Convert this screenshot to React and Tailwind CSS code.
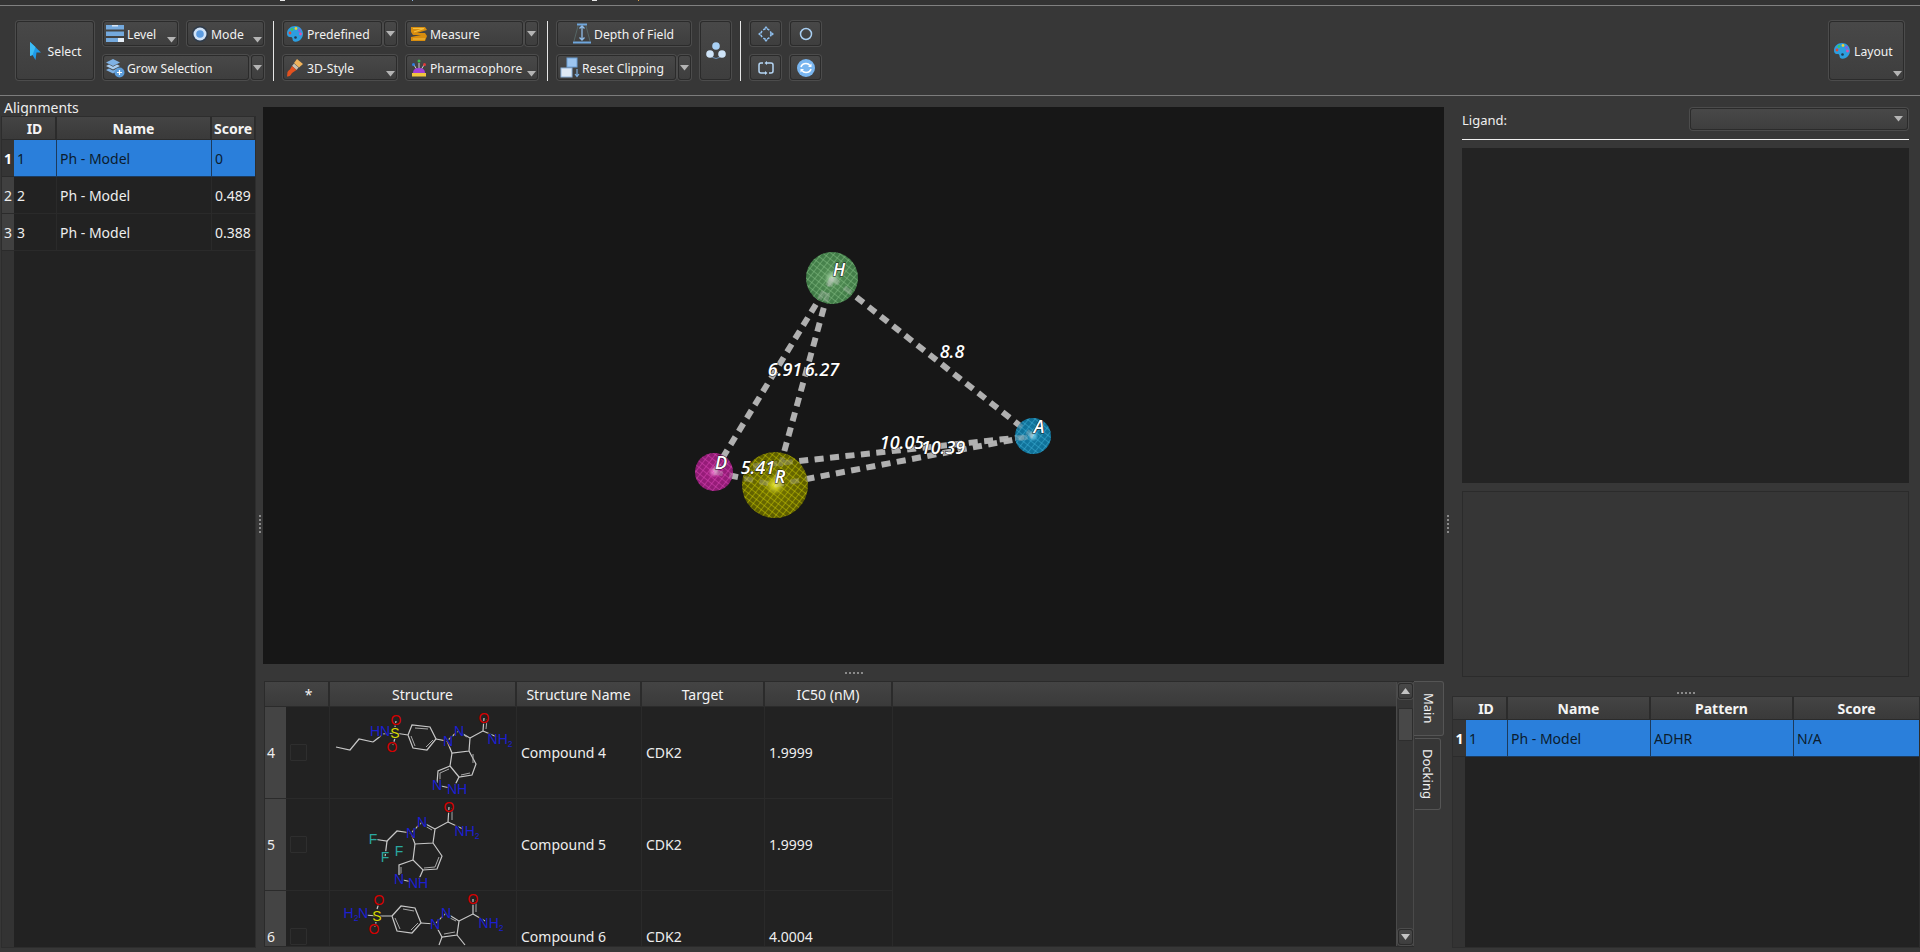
const fontStack = '"Noto Sans", "Open Sans", sans-serif';

const Caret = ({ className = '' }) => (
  <svg width="9" height="6" viewBox="0 0 9 6" className={className}><polygon points="0,0 9,0 4.5,5.5" fill="#b4b4b4" /></svg>
);

const PaletteIcon = () => (
  <svg width="18" height="18" viewBox="0 0 18 18">
    <path d="M9 1C4.5 1 1 4.3 1 8.6c0 2.2 1.3 3.6 3 3.4 1.5-.2 2.4.4 2.5 1.8.1 1.8 1.2 3.2 3.2 3C13.8 16.4 17 13 17 8.8 17 4.4 13.5 1 9 1z" fill="#2c9ee0" />
    <circle cx="4" cy="8" r="1.4" fill="#e8452f" /><circle cx="6" cy="4.5" r="1.4" fill="#3fc45a" /><circle cx="10" cy="3.5" r="1.4" fill="#e6d13a" />
    <circle cx="13.5" cy="5.5" r="1.4" fill="#8a5be0" /><circle cx="14.5" cy="9" r="1.4" fill="#e04fa8" /><circle cx="9.5" cy="12.5" r="1.3" fill="#21384f" />
  </svg>
);

const icons = {
  select: (
    <svg width="13" height="20" viewBox="0 0 13 20"><path d="M1 1 L12 11.5 L7.5 11.5 L6.5 19 L3.5 14 L1 15z" fill="#1e9be8" /><path d="M1 1 L6.5 6 L3.5 14 L1 15z" fill="#3dbdf5" /></svg>
  ),
  level: (
    <svg width="20" height="19" viewBox="0 0 20 19">
      <rect x="1" y="1" width="18" height="4.5" fill="#74a9dd" /><rect x="1" y="7.5" width="18" height="4.5" fill="#74a9dd" /><rect x="1" y="14" width="18" height="4" fill="#74a9dd" />
      <rect x="13" y="14" width="6" height="4" fill="#e6eef7" /><rect x="7" y="1" width="6" height="1.5" fill="#d8e6f5" />
    </svg>
  ),
  mode: (
    <svg width="18" height="18" viewBox="0 0 18 18"><circle cx="9" cy="9" r="8" fill="#2f3b4a" /><circle cx="9" cy="9" r="6.5" fill="#cfe2f7" /><circle cx="9" cy="9" r="3.8" fill="#5b9be0" /></svg>
  ),
  grow: (
    <svg width="20" height="20" viewBox="0 0 20 20">
      <path d="M8 1 L15 4.5 L8 8 L1 4.5z" fill="#7fb2e5" /><path d="M1 8 L4 6.5 L8 8.7 L12 6.5 L15 8 L8 11.5z" fill="#a9cdf0" /><path d="M1 12 L4 10.5 L8 12.5 L12 10.5 L14 12 L8 15.5z" fill="#7fb2e5" />
      <circle cx="14.5" cy="14.5" r="5" fill="#5d9edc" /><path d="M14.5 12 V17 M12 14.5 H17" stroke="#fff" strokeWidth="1.2" />
    </svg>
  ),
  measure: (
    <svg width="18" height="18" viewBox="0 0 18 18"><path d="M1 2 H15 L17 5 L7 8 H15 L17 11 L15 16 H1 L1 12 L11 10 H3 L1 7z" fill="#d88d0e" /><path d="M3 3.5 H14 L4 7 M3 14 H15" stroke="#f4c040" strokeWidth="1.2" fill="none" /></svg>
  ),
  brush: (
    <svg width="18" height="20" viewBox="0 0 18 20">
      <path d="M11 1 L17 6 L13 9.5 L8 5z" fill="#f0b35c" /><path d="M8 5.5 L12.5 9.5 L10.5 12 L6 8z" fill="#c9c0b0" /><path d="M6 8 L10.5 12 L6 15 Q4 19 1 18.5 L1.5 14 Q2.5 12 4 11.5z" fill="#e2511f" />
    </svg>
  ),
  pharma: (
    <svg width="18" height="20" viewBox="0 0 18 20">
      <path d="M9 5 V11 M4 7 L6.5 11 M14 7 L11.5 11" stroke="#cfcfcf" strokeWidth="1" />
      <circle cx="9" cy="3" r="1.5" fill="#3fb950" /><circle cx="3.5" cy="6.5" r="1.5" fill="#2f7fe0" /><circle cx="14.5" cy="6.5" r="1.5" fill="#e03a3a" />
      <path d="M3 15 Q3 10 9 10 Q15 10 15 15z" fill="#a13fd8" /><rect x="2" y="15" width="14" height="3.5" fill="#f0c63c" />
    </svg>
  ),
  depth: (
    <svg width="20" height="21" viewBox="0 0 20 21" fill="none">
      <path d="M5 1.5 H15" stroke="#6fa6dc" strokeWidth="2" /><path d="M1 19.5 H19" stroke="#6fa6dc" strokeWidth="2" /><path d="M6 3 L2 18 M14 3 L18 18" stroke="#566" strokeWidth="1" />
      <path d="M10 3 V17 M7.5 5.5 L10 3 L12.5 5.5 M7.5 14.5 L10 17 L12.5 14.5" stroke="#8fbce8" strokeWidth="1.3" />
    </svg>
  ),
  clip: (
    <svg width="21" height="21" viewBox="0 0 21 21">
      <rect x="7" y="1" width="10" height="9" fill="#9dc5ef" stroke="#6c9fd6" /><rect x="1" y="11" width="11" height="9" fill="#dfe9f5" stroke="#8fb4dc" />
      <path d="M17 12 V19 M15 17 L17 19.5 L19 17" stroke="#7fb2e5" strokeWidth="1.2" fill="none" />
    </svg>
  ),
  nodes: (
    <svg width="20" height="18" viewBox="0 0 20 18">
      <path d="M3 12 Q10 21 17 12" stroke="#6f93b8" strokeWidth="1" fill="none" /><circle cx="10" cy="4" r="3.8" fill="#a9d0f5" /><circle cx="4" cy="12" r="3.8" fill="#cfe4f8" /><circle cx="16" cy="12" r="3.8" fill="#cfe4f8" />
    </svg>
  ),
  move: (
    <svg width="16" height="16" viewBox="0 0 16 16" fill="none">
      <circle cx="8" cy="8" r="5" stroke="#8fbfee" strokeWidth="1.5" strokeDasharray="2.5 1.5" />
      <path d="M8 0 L10 2.5 H6z M8 16 L10 13.5 H6z M0 8 L2.5 6 V10z M16 8 L13.5 6 V10z" fill="#8fbfee" />
    </svg>
  ),
  ring: (
    <svg width="14" height="14" viewBox="0 0 14 14"><circle cx="7" cy="7" r="5.5" stroke="#a9cff2" strokeWidth="1.5" fill="none" /></svg>
  ),
  loop: (
    <svg width="16" height="14" viewBox="0 0 16 14" fill="none">
      <path d="M5 2 H3 Q1 2 1 4 V10 Q1 12 3 12 H7 M11 12 H13 Q15 12 15 10 V4 Q15 2 13 2 H9" stroke="#b5d6f5" strokeWidth="1.5" />
      <path d="M9 0 L6.5 2 L9 4z M7 10 L9.5 12 L7 14z" fill="#b5d6f5" />
    </svg>
  ),
  refresh: (
    <svg width="18" height="18" viewBox="0 0 18 18" fill="none">
      <circle cx="9" cy="9" r="9" fill="#79b6f0" />
      <path d="M4 8 Q5 4.5 9 4.5 Q11.5 4.5 13 6.5 M14 10 Q13 13.5 9 13.5 Q6.5 13.5 5 11.5" stroke="#fff" strokeWidth="1.6" />
      <path d="M14.5 4.5 V8 H11z M3.500 13.5 V10 H7z" fill="#fff" />
    </svg>
  ),
};

const btnClass = 'rounded-[3px] border border-[#2b2b2b] bg-gradient-to-b from-[#484848] to-[#3e3e3e] shadow-[0_0_0_1px_#4c4c4c] flex items-center text-[#f1f1f1] text-[12.2px] leading-none shrink-0';

function ToolButton({ icon, label, width, caret, pad = 'pl-[1px]', gap = 'gap-[2px]' }) {
  return (
    <div className={`${btnClass} h-[25px] ${pad} ${gap}`} style={{ width }}>
      {icon}
      <span className="whitespace-nowrap pt-[3px]">{label}</span>
      {caret && <Caret className="ml-auto self-end mb-[2px] mr-[1px]" />}
    </div>
  );
}

function SplitButton({ icon, label, width, pad, gap }) {
  return (
    <div className="flex gap-[2px] shrink-0" style={{ width }}>
      <div className={`${btnClass} h-[25px] flex-1 ${pad || 'pl-[1px]'} ${gap || 'gap-[2px]'}`}>
        {icon}
        <span className="whitespace-nowrap pt-[3px]">{label}</span>
      </div>
      <div className={`${btnClass} h-[25px] w-[13px] justify-center`}><Caret /></div>
    </div>
  );
}

const IconButton = ({ icon }) => (
  <div className={`${btnClass} h-[25px] w-[31px] justify-center`}>{icon}</div>
);

const Divider = () => <div className="w-px h-[60px] bg-[#e6e6e6] shrink-0" />;

function Toolbar() {
  return (
    <div className="h-[89px] pl-[16px] pr-[16px] pt-[15px] flex items-start">
      <div className={`${btnClass} h-[59px] w-[78px] justify-center gap-[6px] mr-[9px]`}>
        {icons.select}
        <span className="pt-[3px]">Select</span>
      </div>
      <div className="flex flex-col gap-[9px] mr-[9px]">
        <div className="flex gap-[9px]">
          <ToolButton icon={icons.level} label="Level" width={75} caret />
          <ToolButton icon={icons.mode} label="Mode" width={77} caret pad="pl-[3px]" gap="gap-[2px]" />
        </div>
        <SplitButton icon={icons.grow} label="Grow Selection" width={161} />
      </div>
      <Divider />
      <div className="flex flex-col gap-[9px] ml-[9px] mr-[9px]">
        <SplitButton icon={<PaletteIcon />} label="Predefined" width={114} pad="pl-[2px]" gap="gap-[3px]" />
        <ToolButton icon={icons.brush} label="3D-Style" width={114} caret pad="pl-[2px]" gap="gap-[3px]" />
      </div>
      <div className="flex flex-col gap-[9px] mr-[9px]">
        <SplitButton icon={icons.measure} label="Measure" width={132} pad="pl-[3px]" gap="gap-[2px]" />
        <ToolButton icon={icons.pharma} label="Pharmacophore" width={132} caret pad="pl-[3px]" gap="gap-[2px]" />
      </div>
      <Divider />
      <div className="flex flex-col gap-[9px] ml-[9px] mr-[9px]">
        <ToolButton icon={icons.depth} label="Depth of Field" width={134} pad="pl-[14px]" gap="gap-[2px]" />
        <SplitButton icon={icons.clip} label="Reset Clipping" width={134} pad="pl-[2px]" gap="gap-[1px]" />
      </div>
      <div className={`${btnClass} h-[59px] w-[31px] justify-center mr-[9px]`}>{icons.nodes}</div>
      <Divider />
      <div className="grid grid-cols-[31px_31px] gap-x-[9px] gap-y-[9px] ml-[9px]">
        <IconButton icon={icons.move} />
        <IconButton icon={icons.ring} />
        <IconButton icon={icons.loop} />
        <IconButton icon={icons.refresh} />
      </div>
      <div className={`${btnClass} h-[59px] w-[75px] ml-auto pl-[3px] gap-[3px] relative`}>
        <PaletteIcon />
        <span className="pt-[3px]">Layout</span>
        <Caret className="absolute right-[1px] bottom-[2px]" />
      </div>
    </div>
  );
}

const headCell = 'bg-gradient-to-b from-[#444444] to-[#3a3a3a] border-r-2 border-[#2b2b2b] flex items-center justify-center text-[14px] text-[#f4f4f4] whitespace-nowrap';

function DataTable({ className, cols, headers, rows }) {
  return (
    <div className={`bg-[#222222] border border-[#2d2d2d] flex flex-col overflow-hidden ${className}`}>
      <div className="grid h-[23px] shrink-0 border-b border-[#2b2b2b]" style={{ gridTemplateColumns: cols }}>
        <div className="bg-gradient-to-b from-[#444444] to-[#3a3a3a]" />
        {headers.map((h) => <div key={h} className={`${headCell} font-bold`}>{h}</div>)}
      </div>
      <div className="flex-1 relative">
        <div className="absolute left-0 top-0 bottom-0 w-[12px] bg-[#333333]" />
        {rows.map((r, i) => (
          <div key={r[0]} className="grid h-[37px] relative" style={{ gridTemplateColumns: cols }}>
            <div className={`flex items-center justify-center text-[14px] border-b border-[#2b2b2b] ${i === 0 ? 'bg-[#353535] font-bold text-white' : 'bg-[#404040] text-[#ececec]'}`}>{r[0]}</div>
            {r.slice(1).map((c, j) => (
              <div key={j} className={`flex items-center pl-[3px] text-[14px] whitespace-nowrap border-r border-b ${i === 0 ? 'bg-[#2a7fdb] text-[#0b1c2e] border-[#1c3a5c]' : 'text-[#eeeeee] border-[#2a2a2a]'}`}>{c}</div>
            ))}
          </div>
        ))}
      </div>
    </div>
  );
}

// molecule drawings for the structure column
const atomColor = { N: '#1c1fd0', O: '#d40000', S: '#d8d800', F: '#2aa8a0' };

function Molecule({ bonds, doubles = [], labels, height = 91 }) {
  return (
    <svg width="186" height={height} viewBox={`0 0 186 ${height}`} className="block">
      {bonds.map((b, i) => <polyline key={i} points={b} fill="none" stroke="#c8c8c8" strokeWidth="1.2" />)}
      {doubles.map((b, i) => <polyline key={i} points={b} fill="none" stroke="#a8a8a8" strokeWidth="1" />)}
      {labels.map(([t, x, y, col, sub], i) => (
        <text key={i} x={x} y={y} textAnchor="middle" fontSize="14" fill={atomColor[col]} stroke="#222222" strokeWidth="1.5" paintOrder="stroke" fontFamily="'Liberation Sans', sans-serif">
          {t}{sub && <tspan fontSize="8.5" dy="3">{sub}</tspan>}
        </text>
      ))}
    </svg>
  );
}

const mol4 = {
  bonds: ['6,40 20,43 29,32 43,35', '43,35 52,28', '52,27 65,26 78,28', '65,20 66,14', '65,31 63,38', '78,28 82,18 100,20 106,32 97,43 83,41 78,28', '106,32 117,34 128,24 140,31 139,44 122,46 117,34', '140,31 153,24 154,11', '153,24 167,30', '139,44 146,57 142,68 129,70 120,59 122,46', '120,59 108,64 107,76', '111,79 120,81', '129,70 125,78'],
  doubles: ['85,21 98,22', '103,33 96,40', '85,39 81,29', '130,26 137,30', '156,22 157,12', '143,47 143,56', '140,66 131,68', '110,66 110,74', '119,62 110,66'],
  labels: [['HN', 50, 29, 'N'], ['S', 65, 31, 'S'], ['O', 66, 18, 'O'], ['O', 62, 45, 'O'], ['N', 118, 39, 'N'], ['N', 129, 29, 'N'], ['O', 154, 16, 'O'], ['NH', 170, 37, 'N', '2'], ['N', 107, 83, 'N'], ['NH', 127, 87, 'N']],
};

const mol5 = {
  bonds: ['43,40 57,42 67,32 81,34', '57,42 55,58', '81,34 92,23 105,30 103,44 85,45 81,34', '105,30 118,23 119,8', '118,23 133,30', '103,44 112,57 107,70 93,71 83,61 85,45', '83,61 69,66 69,76', '73,81 82,83', '93,71 89,80'],
  doubles: ['95,27 102,31', '122,21 122,9', '109,58 105,68', '105,68 94,69', '71,68 71,75'],
  labels: [['F', 43, 45, 'F'], ['F', 55, 63, 'F'], ['F', 69, 57, 'F'], ['N', 81, 39, 'N'], ['N', 92, 28, 'N'], ['O', 119, 13, 'O'], ['NH', 137, 37, 'N', '2'], ['N', 69, 85, 'N'], ['NH', 88, 89, 'N']],
};

const mol6 = {
  bonds: ['35,24 47,25 62,25', '47,18 49,12', '46,31 45,36', '62,25 71,15 85,17 91,32 82,42 67,40 62,25', '91,32 105,33 116,22 129,30 127,44 112,46 105,33', '129,30 143,23 143,8', '143,23 155,30', '127,44 135,54', '112,46 109,54'],
  doubles: ['73,18 84,20', '88,32 81,39', '70,38 65,27', '118,26 126,30', '114,43 125,41', '146,21 146,9'],
  labels: [['H', 21, 27, 'N', '2'], ['N', 33, 27, 'N'], ['S', 47, 30, 'S'], ['O', 49, 14, 'O'], ['O', 44, 43, 'O'], ['N', 105, 38, 'N'], ['N', 116, 27, 'N'], ['O', 143, 13, 'O'], ['NH', 161, 37, 'N', '2']],
};

const compounds = [
  { n: 4, name: 'Compound 4', ic50: '1.9999', mol: mol4 },
  { n: 5, name: 'Compound 5', ic50: '1.9999', mol: mol5 },
  { n: 6, name: 'Compound 6', ic50: '4.0004', mol: mol6 },
];

const SCR = ({ up }) => (
  <div className={`${btnClass} h-[16px] w-[15px] justify-center`}>
    <svg width="9" height="6" viewBox="0 0 9 6"><polygon points={up ? '0,6 9,6 4.5,0' : '0,0 9,0 4.5,6'} fill="#c4c4c4" /></svg>
  </div>
);

function CompoundTable() {
  return (
    <div className="flex-1 min-w-0 ml-px border border-[#2b2b2b] border-r-0 flex h-full">
      <div className="flex-1 min-w-0 flex flex-col overflow-hidden bg-[#222222]">
        <div className="flex h-[25px] shrink-0 bg-gradient-to-b from-[#444444] to-[#3a3a3a] border-b border-[#2b2b2b]">
          <div className={`${headCell} w-[65px]`}><span className="pl-[24px]">*</span></div>
          <div className={`${headCell} w-[187px]`}>Structure</div>
          <div className={`${headCell} w-[125px]`}>Structure Name</div>
          <div className={`${headCell} w-[123px]`}>Target</div>
          <div className={`${headCell} w-[128px]`}>IC50 (nM)</div>
        </div>
        <div className="flex-1 overflow-hidden">
          {compounds.map((c) => (
            <div key={c.n} className="flex h-[92px] shrink-0 text-[14px] text-[#eeeeee]">
              <div className="w-[21px] bg-[#444444] border-b border-[#2b2b2b] flex items-center pl-[2px]">{c.n}</div>
              <div className="w-[44px] border-r border-b border-[#2a2a2a] flex items-center pl-[4px]">
                <div className="w-[17px] h-[17px] border border-[#2e2e2e] bg-[#232323] rounded-[1px]" />
              </div>
              <div className="w-[187px] border-r border-b border-[#2a2a2a]"><Molecule {...c.mol} /></div>
              <div className="w-[125px] border-r border-b border-[#2a2a2a] flex items-center pl-[4px]">{c.name}</div>
              <div className="w-[123px] border-r border-b border-[#2a2a2a] flex items-center pl-[4px]">CDK2</div>
              <div className="w-[128px] border-r border-b border-[#2a2a2a] flex items-center pl-[4px]">{c.ic50}</div>
            </div>
          ))}
        </div>
      </div>
      <div className="w-[18px] shrink-0 bg-[#363636] border-x border-[#4a4a4a] flex flex-col items-center py-[1px]">
        <SCR up />
        <div className="w-[15px] h-[33px] mt-[9px] bg-[#484848] border border-[#2d2d2d] rounded-[1px]" />
        <div className="mt-auto"><SCR /></div>
      </div>
    </div>
  );
}

// 3D pharmacophore scene
const spheres = [
  { id: 'h', x: 569, y: 171, r: 26, base: '#4f8a52', dark: '#3f7a46', mesh: '#86bf86', glow: '#b9e3b9' },
  { id: 'a', x: 770, y: 329, r: 18, base: '#12779f', dark: '#0f6f96', mesh: '#3eb0d6', glow: '#8fe4ff' },
  { id: 'd', x: 451, y: 365, r: 19, base: '#9c1c7c', dark: '#8d1c73', mesh: '#dc45b6', glow: '#ff9be4' },
  { id: 'r', x: 512, y: 378, r: 33, base: '#6f6f00', dark: '#5c5c00', mesh: '#c8c800', glow: '#f3f33a' },
];

const sceneLines = [
  [569, 171, 770, 329],
  [569, 171, 451, 365],
  [569, 171, 512, 378],
  [451, 365, 512, 378],
  [512, 378, 770, 329],
  [490, 359, 770, 329],
];

const sceneLabels = [
  ['6.91', 522, 269],
  ['6.27', 559, 269],
  ['8.8', 689, 251],
  ['10.05', 639, 342],
  ['10.39', 680, 347],
  ['5.41', 495, 367],
  ['H', 576, 169],
  ['A', 776, 326],
  ['D', 458, 362],
  ['R', 517, 376],
];

function Scene() {
  return (
    <svg width="1181" height="557" viewBox="0 0 1181 557" className="block">
      <defs>
        {spheres.map((s) => (
          <g key={s.id}>
            <radialGradient id={`grad-${s.id}`} cx="0.5" cy="0.5" r="0.5">
              <stop offset="0" stopColor={s.glow} />
              <stop offset="0.3" stopColor={s.base} />
              <stop offset="1" stopColor={s.dark} />
            </radialGradient>
            <pattern id={`mesh-${s.id}`} width="5" height="5" patternUnits="userSpaceOnUse" patternTransform="rotate(38)">
              <path d="M0 0 H5 M0 0 V5" stroke={s.mesh} strokeWidth="1" />
            </pattern>
          </g>
        ))}
      </defs>
      {sceneLines.map((l, i) => (
        <line key={i} x1={l[0]} y1={l[1]} x2={l[2]} y2={l[3]} stroke="#a8a8a8" strokeWidth="6" strokeDasharray="9 6.5" />
      ))}
      {spheres.map((s) => (
        <g key={s.id}>
          <circle cx={s.x} cy={s.y} r={s.r} fill={`url(#grad-${s.id})`} />
          <circle cx={s.x} cy={s.y} r={s.r} fill={`url(#mesh-${s.id})`} />
        </g>
      ))}
      {sceneLines.map((l, i) => (
        <line key={i} x1={l[0]} y1={l[1]} x2={l[2]} y2={l[3]} stroke="#c4c4c4" strokeWidth="5" strokeDasharray="9 6.5" opacity="0.3" />
      ))}
      {sceneLabels.map(([t, x, y]) => (
        <text key={t} x={x} y={y} textAnchor="middle" fontSize="18" fontStyle="italic" fontWeight="600" fill="#ffffff" stroke="#111111" strokeWidth="1" paintOrder="stroke" fontFamily="'Open Sans', sans-serif">{t}</text>
      ))}
    </svg>
  );
}

const DotsH = () => <div className="w-[18px] h-[2px] border-t-2 border-dotted border-[#8a8a8a]" />;
const DotsV = () => <div className="h-[18px] w-[2px] border-l-2 border-dotted border-[#8a8a8a]" />;

function RightPanel() {
  return (
    <div className="flex flex-col h-full">
      <div className="pl-[10px] pr-[11px] pt-[12px]">
        <div className="flex items-center justify-between h-[22px] pr-[1px]">
          <span className="text-[13px] text-[#f0f0f0] pt-[3px]">Ligand:</span>
          <div className={`${btnClass} w-[218px] h-[22px] justify-end pr-[4px]`}><Caret /></div>
        </div>
        <div className="h-px bg-[#f0f0f0] mt-[9px]" />
        <div className="h-[335px] bg-[#232323] mt-[8px]" />
        <div className="h-[186px] bg-[#363636] border border-[#2b2b2b] mt-[8px]" />
      </div>
      <div className="flex justify-center pt-[15px] pb-[2px]"><DotsH /></div>
      <DataTable
        className="flex-1 mb-[4px]"
        cols="13px 42px 143px 143px 127px"
        headers={['ID', 'Name', 'Pattern', 'Score']}
        rows={[['1', '1', 'Ph - Model', 'ADHR', 'N/A']]}
      />
    </div>
  );
}

export default function App() {
  return (
    <div className="w-[1920px] h-[952px] bg-[#373737] flex flex-col overflow-hidden" style={{ fontFamily: fontStack }}>
      <div className="h-[5px] bg-[#333333] shrink-0 flex items-start">
        {/* tails of the clipped title text */}
        <span className="ml-[280px] w-[5px] h-px bg-[#e8e8e8]" />
        <span className="ml-[127px] w-px h-px bg-[#8fb4dc]" />
        <span className="ml-[179px] w-[5px] h-px bg-[#e8e8e8]" />
        <span className="ml-[41px] w-px h-px bg-[#e0a040]" />
      </div>
      <div className="h-px bg-[#808080] shrink-0" />
      <Toolbar />
      <div className="h-px bg-[#7c7c7c] shrink-0" />

      <div className="flex-1 flex min-h-0">
        {/* Alignments */}
        <div className="w-[256px] shrink-0 flex flex-col pl-px pb-[4px]">
          <div className="h-[20px] pl-[3px] pt-[2px] flex items-center text-[14px] text-[#eeeeee] shrink-0">Alignments</div>
          <DataTable
            className="flex-1"
            cols="12px 43px 155px 44px"
            headers={['ID', 'Name', 'Score']}
            rows={[['1', '1', 'Ph - Model', '0'], ['2', '2', 'Ph - Model', '0.489'], ['3', '3', 'Ph - Model', '0.388']]}
          />
        </div>

        <div className="w-[7px] shrink-0 flex items-center justify-center"><DotsV /></div>

        {/* Viewer and compounds */}
        <div className="w-[1181px] shrink-0 flex flex-col pt-[11px] pb-[5px]">
          <div className="h-[557px] bg-[#171717] shrink-0"><Scene /></div>
          <div className="h-[17px] shrink-0 flex items-center justify-center"><DotsH /></div>
          <div className="flex-1 min-h-0 flex">
            <CompoundTable />
            <div className="w-[30px] shrink-0 flex flex-col text-[13px] text-[#eeeeee]">
              <div className="h-[55px] bg-[#3e3e3e] border border-l-0 border-[#555555] rounded-r-[3px] flex items-center justify-center [writing-mode:vertical-rl]">Main</div>
              <div className="h-[72px] w-[26px] mt-[2px] ml-px bg-[#363636] border border-l-0 border-[#555555] rounded-r-[3px] flex items-center justify-center [writing-mode:vertical-rl]">Docking</div>
            </div>
          </div>
        </div>

        <div className="w-[8px] shrink-0 flex items-center justify-center"><DotsV /></div>

        <div className="flex-1 min-w-0"><RightPanel /></div>
      </div>
    </div>
  );
}
